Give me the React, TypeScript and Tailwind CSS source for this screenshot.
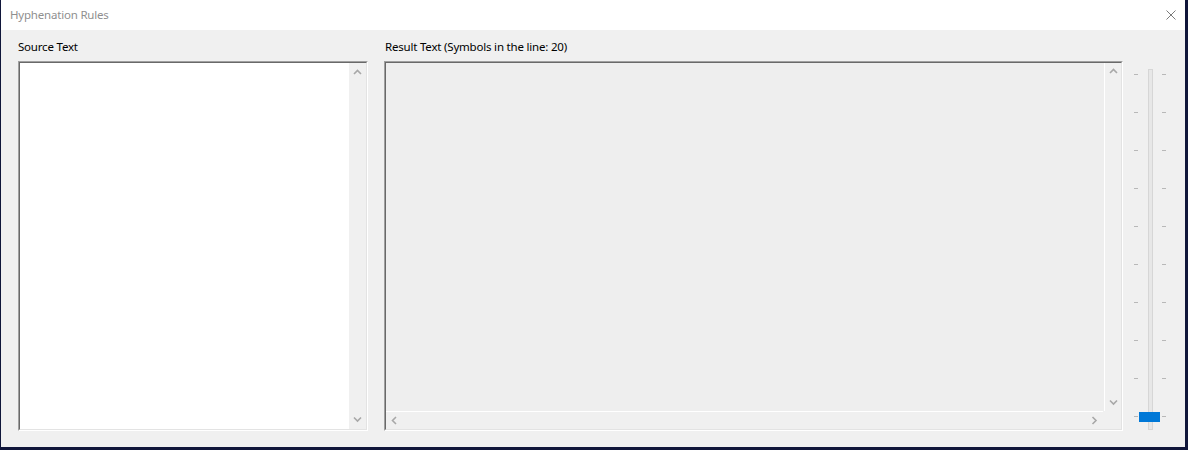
const ticks = Array.from({ length: 10 }, (_, i) => i);

function Chevron({ dir }: { dir: "up" | "down" | "left" | "right" }) {
  const pts: Record<string, string> = {
    up: "1,5 4.5,1.5 8,5",
    down: "1,1.5 4.5,5 8,1.5",
    left: "5,1 1.5,4.5 5,8",
    right: "1.5,1 5,4.5 1.5,8",
  };
  const vertical = dir === "up" || dir === "down";
  return (
    <svg
      width={vertical ? 9 : 7}
      height={vertical ? 7 : 9}
      viewBox={vertical ? "0 0 9 7" : "0 0 7 9"}
      className="block"
    >
      <polyline points={pts[dir]} fill="none" stroke="#a8a8a8" strokeWidth="1.6" />
    </svg>
  );
}

function Sunken({ className, children }: { className: string; children: React.ReactNode }) {
  return (
    <div
      className={`border border-t-[#a0a0a0] border-l-[#a0a0a0] border-b-white border-r-white ${className}`}
    >
      <div className="flex h-full border border-t-[#696969] border-l-[#696969] border-b-[#e3e3e3] border-r-[#e3e3e3]">
        {children}
      </div>
    </div>
  );
}

function VScroll({ className = "" }: { className?: string }) {
  return (
    <div className={`flex w-[17px] flex-col justify-between bg-[#f0f0f0] ${className}`}>
      <div className="flex h-[17px] items-center justify-center">
        <Chevron dir="up" />
      </div>
      <div className="flex h-[17px] items-center justify-center">
        <Chevron dir="down" />
      </div>
    </div>
  );
}

export default function App() {
  return (
    <div className="h-[450px] w-[1188px] bg-[#10163a] pl-[1px] font-['Noto_Sans','Liberation_Sans',sans-serif] text-[11.5px] tracking-[-0.2px]">
      <div className="flex h-[447px] w-[1184px] flex-col bg-[#f0f0f0]">
        {/* title bar */}
        <div className="flex h-[30px] items-center justify-between bg-white pl-[9px] pr-[8px]">
          <span className="leading-[16px] text-[#8f8f8f]">Hyphenation Rules</span>
          <svg width="10" height="10" viewBox="0 0 10 10" className="mr-[1px]">
            <path d="M0.5 0.5 L9.5 9.5 M9.5 0.5 L0.5 9.5" stroke="#7a7a7a" strokeWidth="1" />
          </svg>
        </div>

        {/* body */}
        <div className="flex pl-[17px] pt-[9px]">
          <div className="flex w-[350px] flex-col">
            <div className="h-[22px] leading-[16px] text-black">Source Text</div>
            <Sunken className="h-[370px]">
              <div className="flex-1 bg-white" />
              <VScroll className="py-px" />
            </Sunken>
          </div>

          <div className="ml-[16px] flex w-[739px] flex-col">
            <div className="h-[22px] pl-px leading-[16px] text-black">
              Result Text (Symbols in the line: 20)
            </div>
            <Sunken className="h-[370px]">
              <div className="flex flex-1 flex-col bg-[#eeeeee]">
                <div className="flex flex-1">
                  <div className="flex-1" />
                  <VScroll className="border-l border-white" />
                </div>
                <div className="flex h-[18px]">
                  <div className="flex flex-1 items-center justify-between border-t border-white bg-[#f0f0f0]">
                    <div className="flex w-[17px] justify-center">
                      <Chevron dir="left" />
                    </div>
                    <div className="flex w-[17px] justify-center">
                      <Chevron dir="right" />
                    </div>
                  </div>
                  <div className="w-[18px] bg-[#f0f0f0]" />
                </div>
              </div>
            </Sunken>
          </div>

          {/* slider */}
          <div className="relative ml-[7px] mt-[22px] flex h-[370px] w-[40px] pl-[4px]">
            <div className="mt-[13px] flex h-[343px] w-[4px] flex-col justify-between">
              {ticks.map((t) => (
                <div key={t} className="h-px bg-[#b8b8b8]" />
              ))}
            </div>
            <div className="ml-[10px] mt-[8px] h-[361px] w-[5px] border border-[#d6d6d6] bg-[#e7e7e7]" />
            <div className="ml-[9px] mt-[13px] flex h-[343px] w-[4px] flex-col justify-between">
              {ticks.map((t) => (
                <div key={t} className="h-px bg-[#b8b8b8]" />
              ))}
            </div>
            <div className="absolute left-[9px] top-[351px] h-[10px] w-[21px] bg-[#0078d7]" />
          </div>
        </div>
      </div>
    </div>
  );
}
